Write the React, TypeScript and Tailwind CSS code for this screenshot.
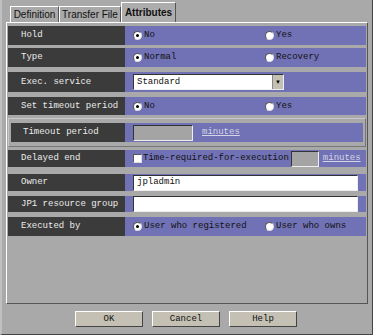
import React from 'react';

const mono = "font-['Liberation_Mono',monospace] text-[9px] leading-none whitespace-nowrap";

const Radio: React.FC<{ checked?: boolean }> = ({ checked }) => (
  <span className="inline-flex items-center justify-center w-[9px] h-[9px] rounded-full bg-white border border-[#555] border-r-[#ddd] border-b-[#ddd] mr-[2px] shrink-0">
    {checked && <span className="block w-[3px] h-[3px] rounded-full bg-black" />}
  </span>
);

const Option: React.FC<{ label: string; checked?: boolean; wide?: boolean }> = ({ label, checked, wide }) => (
  <span className={`flex items-center ${wide ? 'w-[132px]' : ''}`}>
    <Radio checked={checked} />
    <span className={`${mono} text-[#111]`}>{label}</span>
  </span>
);

const Row: React.FC<{ label: string; h: string; mt: string; children: React.ReactNode }> = ({ label, h, mt, children }) => (
  <div className={`flex ${h} ${mt}`}>
    <div className={`w-[117px] bg-[#3b3b3b] flex items-center pl-[13px] ${mono} text-[#ececec]`}>{label}</div>
    <div className="flex-1 bg-[#7171b5] flex items-center pl-[8px]">{children}</div>
  </div>
);

const Field: React.FC<{ w: string; value?: string; grey?: boolean }> = ({ w, value, grey }) => (
  <div className={`${w} shrink-0 h-[16px] border border-[#333] border-r-[#eee] border-b-[#eee] flex items-center pl-[3px] ${grey ? 'bg-[#a4a4a4]' : 'bg-white'} ${mono} text-[#111]`}>
    {value}
  </div>
);

const Minutes: React.FC<{ ml: string }> = ({ ml }) => (
  <span className={`${mono} text-[#d4d4e4] underline ${ml}`}>minutes</span>
);

const Tab: React.FC<{ label: string; active?: boolean; w: string }> = ({ label, active, w }) => (
  <div
    className={`${w} flex items-center justify-center border-t border-l border-white border-r border-r-[#555] font-['Liberation_Sans',sans-serif] text-[10px] text-[#111] ${
      active ? 'h-[20px] bg-[#adadad] font-bold' : 'h-[16px] bg-[#a9a9a9]'
    }`}
  >
    {label}
  </div>
);

const Button: React.FC<{ label: string }> = ({ label }) => (
  <div className={`w-[68px] h-[16px] bg-[#c4c1b4] border border-white border-r-[#444] border-b-[#444] flex items-center justify-center ${mono} text-[#111]`}>
    {label}
  </div>
);

export default function App() {
  return (
    <div className="w-[373px] h-[335px] bg-[#a9a9a9] border-r border-b border-[#444] border-l-2 border-l-[#c0c0c0] flex flex-col">
      <div className="flex items-end h-[22px] pl-[8px]">
        <Tab label="Definition" w="w-[49px]" />
        <Tab label="Transfer File" w="w-[62px]" />
        <Tab label="Attributes" w="w-[55px]" active />
      </div>
      <div className="mx-[4px] h-[282px] border border-white border-r-[#555] border-b-[#555] px-[1px]">
        <Row label="Hold" h="h-[19px]" mt="mt-[3px]">
          <Option label="No" checked wide />
          <Option label="Yes" />
        </Row>
        <Row label="Type" h="h-[19px]" mt="mt-[3px]">
          <Option label="Normal" checked wide />
          <Option label="Recovery" />
        </Row>
        <Row label="Exec. service" h="h-[20px]" mt="mt-[5px]">
          <div className="w-[151px] h-[16px] bg-white border border-[#333] border-r-[#eee] border-b-[#eee] flex items-center">
            <span className={`flex-1 pl-[3px] ${mono} text-[#111]`}>Standard</span>
            <span className="w-[11px] h-full bg-[#c4c1b4] border-l border-[#888] flex items-center justify-center text-[6px] text-black">▼</span>
          </div>
        </Row>
        <Row label="Set timeout period" h="h-[18px]" mt="mt-[5px]">
          <Option label="No" checked wide />
          <Option label="Yes" />
        </Row>
        <div className="mt-[3px] h-[29px] border border-[#c8c8c8] border-r-[#777] border-b-[#777] pt-[4px] px-[2px]">
          <div className="flex h-[19px]">
            <div className={`w-[114px] bg-[#3b3b3b] flex items-center pl-[12px] ${mono} text-[#ececec]`}>Timeout period</div>
            <div className="flex-1 bg-[#7171b5] flex items-center pl-[8px]">
              <Field w="w-[60px]" grey />
              <Minutes ml="ml-[9px]" />
            </div>
          </div>
        </div>
        <Row label="Delayed end" h="h-[17px]" mt="mt-[3px]">
          <span className="w-[9px] h-[9px] shrink-0 bg-white border border-[#555] border-r-[#ddd] border-b-[#ddd] mr-[1px]" />
          <span className={`${mono} text-[#111]`}>Time-required-for-execution</span>
          <span className="ml-[2px]">
            <Field w="w-[28px]" grey />
          </span>
          <Minutes ml="ml-[4px]" />
        </Row>
        <Row label="Owner" h="h-[17px]" mt="mt-[7px]">
          <Field w="w-[225px]" value="jpladmin" />
        </Row>
        <Row label="JP1 resource group" h="h-[16px]" mt="mt-[5px]">
          <Field w="w-[225px]" />
        </Row>
        <Row label="Executed by" h="h-[19px]" mt="mt-[5px]">
          <Option label="User who registered" checked wide />
          <Option label="User who owns" />
        </Row>
      </div>
      <div className="flex gap-[9px] pl-[73px] mt-[7px]">
        <Button label="OK" />
        <Button label="Cancel" />
        <Button label="Help" />
      </div>
    </div>
  );
}
